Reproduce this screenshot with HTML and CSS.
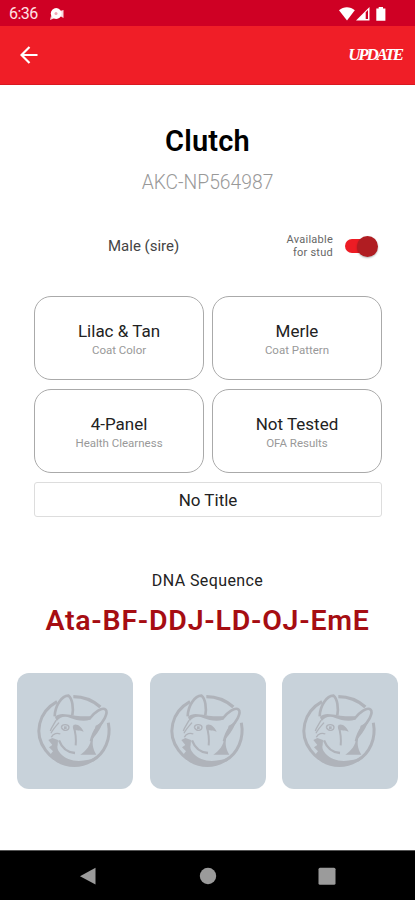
FILE: index.html
```
<!DOCTYPE html>
<html lang="en">
<head>
  <meta charset="UTF-8" />
  <meta name="viewport" content="width=device-width, initial-scale=1.0"/>
  <title>Clutch</title>
  <link rel="stylesheet" href="styles.css">
</head>
<body>

  <!-- dog logo, shared by the photo tiles -->
  <svg class="sprite" width="0" height="0">
    <symbol id="dog" viewBox="-57 -51 348 348">
      <g fill="none" stroke="#afb3ba" stroke-linejoin="round">
        <path d="M112 20C142 20 169 30 193 51" stroke-width="10"/>
        <path d="M217 98C226 145 207 190 168 212" stroke-width="9"/>
        <path d="M63 35C7 66-8 132 29 181C37 192 45 199 55 206" stroke-width="9"/>
        <path d="M56 79C57 48 77 16 98 17C109 26 113 54 109 76" stroke-width="8"/>
        <path d="M159 88C175 66 199 50 209 59C218 69 201 98 184 113C173 126 168 141 165 154" stroke-width="8"/>
        <path d="M113 109C118 126 121 147 119 166" stroke-width="6"/>
        <path d="M69 151C77 172 91 187 117 189" stroke-width="7"/>
        <path d="M60 91C54 103 46 112 43 123M69 98C60 108 51 117 45 130" stroke-width="4"/>
        <path d="M76 112C78 101 97 102 99 111C99 121 84 127 76 112" stroke-width="4"/>
        <path d="M46 142C51 130 64 128 73 132" stroke-width="4"/>
      </g>
      <g fill="#afb3ba">
        <path d="M57 81C69 67 91 73 110 76C132 81 151 78 165 79L162 89C145 95 120 91 103 84C86 76 70 82 62 94Z"/>
        <path d="M84 109H92V117H84Z"/>
        <path d="M112 105C124 99 137 111 143 125C132 120 120 124 112 117Z"/>
        <path d="M37 150L49 144L66 150L65 166C60 180 77 199 97 207C122 217 154 214 190 198C149 244 76 241 40 197L51 184L39 172L49 165Z"/>
        <path d="M165 146C164 164 152 181 133 194L181 194C172 178 168 166 171 146Z"/>
        <path d="M179 107L200 96C194 121 176 137 166 154Z"/>
      </g>
    </symbol>
  </svg>

  <div class="screen">
    <div class="status-bar">
      <span class="clock">6:36</span>
      <svg class="notice" width="16" height="14" viewBox="0 0 16 14" fill="#fff">
        <circle cx="7.2" cy="6.5" r="5.4"/>
        <path d="M2 9L1 13L6 11ZM11 4L14.5 3V11L11 9Z" opacity=".85"/>
        <circle cx="7" cy="6.5" r="1.5" fill="#f2a5b4"/>
      </svg>
      <svg class="signals" width="48" height="14" viewBox="0 0 48 14" fill="#fff">
        <path d="M0 3.2C4.5-.7 11.3-.7 15.8 3.2L8 13.5Z"/>
        <path d="M17 13.5L30.5 0V13.5Z"/>
        <path d="M26.7 5.2L29 3V12H26.7Z" fill="#cf0024"/>
        <path d="M37.3 1.5H39.7V0H44V1.5H46.4V13.7H37.3Z"/>
      </svg>
    </div>

    <div class="app-bar">
      <svg class="back" width="18" height="18" viewBox="0 0 18 18" fill="none" stroke="#fff" stroke-width="2.2">
        <path d="M17.5 9H2M9.5 1L1.5 9L9.5 17"/>
      </svg>
      <span class="update">UPDATE</span>
    </div>

    <main class="content">
      <h1>Clutch</h1>
      <p class="reg-number">AKC-NP564987</p>

      <div class="gender-row">
        <span class="gender">Male (sire)</span>
        <span class="stud">Available<br>for stud</span>
        <span class="switch"><span class="thumb"></span></span>
      </div>

      <div class="traits">
        <div class="trait"><strong>Lilac &amp; Tan</strong><small>Coat Color</small></div>
        <div class="trait"><strong>Merle</strong><small>Coat Pattern</small></div>
        <div class="trait"><strong>4-Panel</strong><small>Health Clearness</small></div>
        <div class="trait"><strong>Not Tested</strong><small>OFA Results</small></div>
      </div>
      <div class="title-box">No Title</div>

      <h2>DNA Sequence</h2>
      <p class="dna">Ata-BF-DDJ-LD-OJ-EmE</p>

      <div class="photos">
        <div class="photo"><svg><use href="#dog"/></svg></div>
        <div class="photo"><svg><use href="#dog"/></svg></div>
        <div class="photo"><svg><use href="#dog"/></svg></div>
      </div>
    </main>

    <div class="nav-bar">
      <svg width="18" height="18" viewBox="0 0 18 18" fill="#9b9b9b"><path d="M16.5 .8V17.5L1 9.2Z"/></svg>
      <svg width="18" height="18" viewBox="0 0 18 18" fill="#9b9b9b"><circle cx="9" cy="9" r="8.2"/></svg>
      <svg width="18" height="18" viewBox="0 0 18 18" fill="#9b9b9b"><rect x=".5" y=".7" width="17" height="17" rx="1.5"/></svg>
    </div>
  </div>

</body>
</html>
```
FILE: styles.css
```
* {
  box-sizing: border-box;
}

body {
  margin: 0;
  font-family: Roboto, "Liberation Sans", sans-serif;
  background: #fff;
  color: #222;
}

h1, h2, p {
  margin: 0;
  text-align: center;
}

.sprite {
  display: block;
}

.screen {
  height: 900px;
  display: flex;
  flex-direction: column;
  overflow: hidden;
}

.status-bar {
  height: 26px;
  background: #cf0024;
  display: flex;
  align-items: center;
  padding: 1px 28px 0 9px;
}

.clock {
  width: 40px;
  color: #ffe3e6;
  font-size: 16px;
  letter-spacing: -0.5px;
}

.signals {
  margin-left: auto;
}

.app-bar {
  height: 59px;
  background: #f01e27;
  border-bottom: 1px solid #d91820;
  display: flex;
  align-items: center;
  justify-content: space-between;
  padding: 0 11px 0 20px;
}

.update {
  color: #fff;
  font-family: "Liberation Serif", serif;
  font-size: 17px;
  font-weight: bold;
  font-style: italic;
  letter-spacing: -2.2px;
  padding-right: 2px;
}

.content {
  flex: 1;
  padding: 38px 17px 0;
}

h1 {
  color: #000;
  font-size: 29px;
  font-weight: 600;
  line-height: 36px;
  letter-spacing: 0.2px;
}

.reg-number {
  margin-top: 12px;
  color: #999;
  font-size: 19.3px;
  font-weight: 300;
  line-height: 24px;
}

.gender-row {
  height: 28px;
  margin-top: 37px;
  padding: 0 21px 0 91px;
  display: flex;
  align-items: center;
}

.gender {
  font-size: 15px;
  color: #444;
}

.stud {
  margin-left: auto;
  text-align: right;
  font-size: 11px;
  line-height: 13px;
  letter-spacing: 0.25px;
  color: #666;
}

.switch {
  width: 32px;
  height: 14px;
  margin-left: 12px;
  border-radius: 7px;
  background: #ed1c24;
  display: flex;
  align-items: center;
  justify-content: flex-end;
}

.thumb {
  width: 21px;
  height: 21px;
  margin-right: -1px;
  flex-shrink: 0;
  border-radius: 50%;
  background: #b01d22;
  box-shadow: 0 1px 2px rgba(0, 0, 0, 0.3);
}

.traits {
  margin: 36px 16px 0 17px;
  display: grid;
  grid-template-columns: 1fr 1fr;
  gap: 9px 8px;
}

.trait {
  height: 84px;
  border: 1px solid #aaa;
  border-radius: 17px;
  display: flex;
  flex-direction: column;
  align-items: center;
  justify-content: center;
  padding-top: 2px;
}

.trait strong {
  font-size: 17px;
  font-weight: 400;
  line-height: 21px;
}

.trait small {
  color: #999;
  font-size: 11.5px;
  line-height: 16px;
}

.title-box {
  height: 35px;
  margin: 9px 16px 0 17px;
  border: 1px solid #ddd;
  border-radius: 3px;
  text-align: center;
  font-size: 17px;
  line-height: 35px;
}

h2 {
  margin-top: 52px;
  font-size: 16px;
  font-weight: 400;
  line-height: 24px;
  letter-spacing: 0.4px;
}

.dna {
  margin-top: 10px;
  color: #a60d12;
  font-size: 28.5px;
  font-weight: 600;
  line-height: 36px;
  letter-spacing: 0.75px;
  white-space: nowrap;
}

.photos {
  display: flex;
  justify-content: space-between;
  margin-top: 34px;
}

.photo {
  width: 116px;
  height: 116px;
  border-radius: 12px;
  background: #c8d2da;
}

.photo svg {
  display: block;
  width: 116px;
  height: 116px;
}

.nav-bar {
  height: 50px;
  background: #000;
  border-top: 1px solid #555;
  display: flex;
  align-items: center;
  justify-content: space-between;
  padding: 0 79px;
}
```
